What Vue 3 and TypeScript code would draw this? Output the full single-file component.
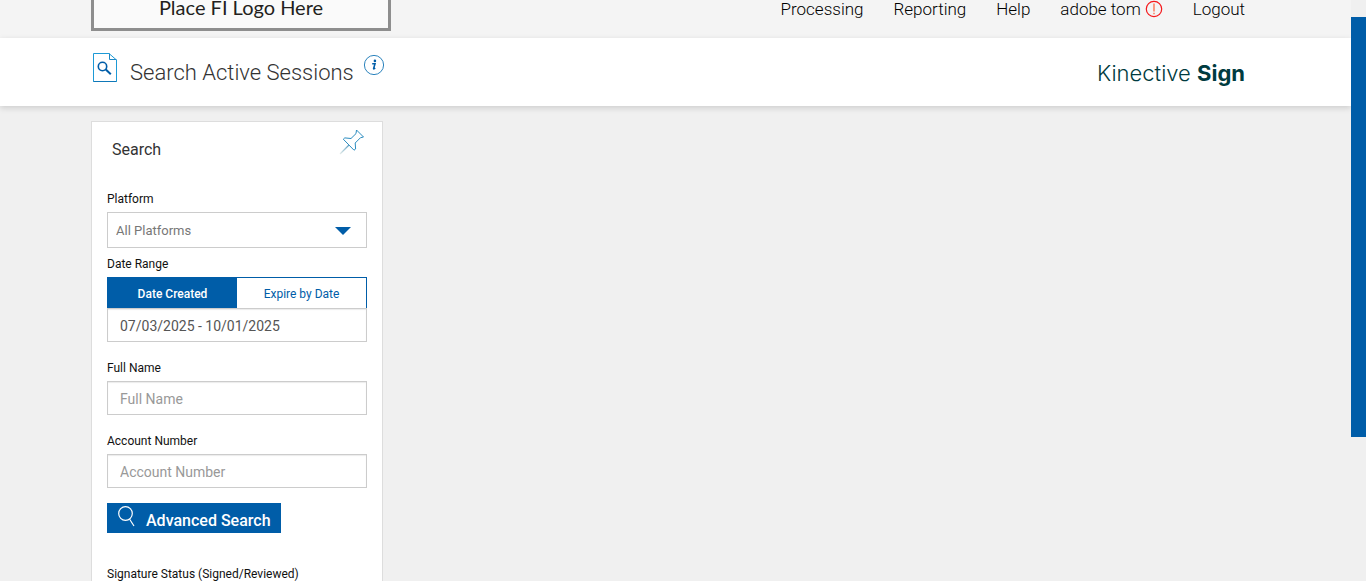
<script setup lang="ts">
import { ref } from 'vue'

type DateMode = 'created' | 'expires'

const leadingLinks = ['Processing', 'Reporting', 'Help']
const dateModes: { id: DateMode; label: string }[] = [
  { id: 'created', label: 'Date Created' },
  { id: 'expires', label: 'Expire by Date' },
]

const dateMode = ref<DateMode>('created')
const platform = ref('all')
const dateRange = ref('07/03/2025 - 10/01/2025')
const fullName = ref('')
const accountNumber = ref('')
</script>

<template>
  <div class="page">
    <div class="view">
      <header class="topbar">
        <div class="container topbar-row">
          <div class="fi-logo">Place FI Logo Here</div>
          <nav class="nav">
            <a v-for="link in leadingLinks" :key="link" href="#">{{ link }}</a>
            <a href="#" class="user">
              adobe tom
              <svg width="18" height="18" viewBox="0 0 18 18" fill="none" stroke="#f5191c">
                <circle cx="9" cy="9" r="7.7" stroke-width="1.2" />
                <path d="M9 3.5v8M9 12.8v1.4" stroke="#ff6a45" stroke-width="1.3" />
              </svg>
            </a>
            <a href="#">Logout</a>
          </nav>
        </div>
      </header>

      <section class="titlebar">
        <div class="container titlebar-row">
          <div class="title">
            <svg class="doc" width="26" height="31" viewBox="0 0 26 31" fill="none">
              <path d="M1.5 1.5H17L24.5 8V29.5H1.5Z" stroke="#1d9ad6" stroke-width="1" />
              <path d="M17.5 1.5V7.5H24.5" stroke="#1d87c4" stroke-width="1" />
              <path d="M1.5 29.5H24.5" stroke="#0f78b8" stroke-width="1" />
              <circle cx="10.5" cy="14.5" r="4.2" stroke="#005da8" stroke-width="1.6" />
              <path d="M13.8 17.6L18.8 22.2" stroke="#005da8" stroke-width="2" />
            </svg>
            <h1>Search Active Sessions</h1>
            <button type="button" class="info" aria-label="Information">
              <svg width="22" height="22" viewBox="0 0 22 22" fill="none">
                <circle cx="11" cy="11" r="9.6" stroke="#2b83bd" stroke-width="1" />
                <circle cx="11.9" cy="6.9" r="1.3" fill="#005da8" />
                <path d="M9.2 9.7H12L10.6 14.6Q10.5 15.3 12.2 14" stroke="#005da8" stroke-width="1.6" />
              </svg>
            </button>
          </div>
          <div class="brand">Kinective <strong>Sign</strong></div>
        </div>
      </section>

      <main class="container">
        <form class="card" @submit.prevent>
          <div class="card-head">
            <h2>Search</h2>
            <button type="button" class="pin" aria-label="Pin search panel">
              <svg width="26" height="26" viewBox="0 0 26 26" fill="none">
                <defs>
                  <linearGradient id="needle" x1="1" y1="25" x2="10" y2="16" gradientUnits="userSpaceOnUse">
                    <stop offset="0" stop-color="#e4ece9" />
                    <stop offset="1" stop-color="#5b9cc0" />
                  </linearGradient>
                </defs>
                <path d="M17.5 1L24.5 8L21.5 8.7L16.2 14L16.6 20L15 21.2L4.3 10.2L5.8 8.9L12 9.5L17 4.6Z" stroke="#2b8cc0" stroke-width="1" stroke-linejoin="round" />
                <path d="M10 16L1 25" stroke="url(#needle)" stroke-width="1.2" />
              </svg>
            </button>
          </div>

          <label for="platform">Platform</label>
          <div class="select-box">
            <select id="platform" v-model="platform">
              <option value="all">All Platforms</option>
            </select>
            <svg class="caret" width="16" height="8" viewBox="0 0 16 8">
              <path d="M0 0H16L8 8Z" fill="#005da8" />
            </svg>
          </div>

          <label for="date-range" class="near">Date Range</label>
          <div class="tabs">
            <button
              v-for="mode in dateModes"
              :key="mode.id"
              type="button"
              :class="{ active: dateMode === mode.id }"
              :aria-pressed="dateMode === mode.id"
              @click="dateMode = mode.id"
            >{{ mode.label }}</button>
          </div>
          <input id="date-range" v-model="dateRange" type="text" />

          <label for="full-name" class="far">Full Name</label>
          <input id="full-name" v-model="fullName" type="text" placeholder="Full Name" />

          <label for="account" class="far">Account Number</label>
          <input id="account" v-model="accountNumber" type="text" placeholder="Account Number" />

          <button type="submit" class="advanced">
            <svg width="18" height="22" viewBox="0 0 18 22" fill="none" stroke="#fff">
              <circle cx="8.5" cy="7.5" r="6.8" stroke-width="1.2" />
              <path d="M12.5 13L17 20" stroke-width="1.2" />
            </svg>
            <span>Advanced Search</span>
          </button>

          <p class="status">Signature Status (Signed/Reviewed)</p>
        </form>
      </main>
    </div>
    <div class="track"><div class="thumb"></div></div>
  </div>
</template>

<style>
body {
  margin: 0;
  background: #f0f0f0;
}
</style>

<style scoped>
.page {
  display: flex;
  height: 100vh;
  overflow: hidden;
  font-family: Roboto, "Liberation Sans", sans-serif;
  background: #f0f0f0;
  color: #111;
}
.page * {
  box-sizing: border-box;
}
.view {
  flex: 1;
  min-width: 0;
  overflow: hidden;
}
.track {
  width: 15px;
  padding-top: 17px;
}
.thumb {
  height: 74.5%;
  background: #005da8;
}
button,
input,
select {
  font-family: inherit;
  margin: 0;
  border-radius: 0;
}
svg {
  display: block;
  flex: none;
}
.container {
  max-width: 1169px;
  margin: 0 auto;
}
.topbar {
  background: #f4f4f4;
}
.topbar-row {
  display: flex;
  justify-content: space-between;
  align-items: flex-start;
  padding-bottom: 7px;
}
.fi-logo {
  width: 300px;
  height: 31px;
  border: 3px solid #8e8e8e;
  border-top: 0;
  background: #fafafa;
  color: #231f20;
  font-family: Lato, sans-serif;
  font-size: 20px;
  line-height: 14px;
  text-align: center;
}
.nav {
  display: flex;
  gap: 30px;
  padding-right: 15px;
  font-size: 17px;
  font-weight: 300;
  line-height: 18px;
}
.nav a {
  color: #000;
  text-decoration: none;
}
.nav .user {
  display: flex;
  gap: 4px;
}
.titlebar {
  position: relative;
  background: #fff;
  box-shadow: 0 2px 6px rgba(0, 0, 0, 0.15);
}
.titlebar-row {
  display: flex;
  justify-content: space-between;
  height: 68px;
  padding: 0 15px 0 1px;
}
.title {
  display: flex;
  padding-top: 14px;
}
.title h1 {
  margin: 0 9px 0 12px;
  color: #333;
  font-size: 22px;
  font-weight: 300;
  line-height: 42px;
}
.info {
  align-self: flex-start;
  padding: 2px 0 0;
  border: 0;
  background: none;
}
.brand {
  color: #003b40;
  font-family: Inter, sans-serif;
  font-size: 22px;
  font-weight: 300;
  line-height: 70px;
}
.brand strong {
  font-weight: 700;
}
.card {
  width: 292px;
  margin-top: 15px;
  padding: 0 15px 15px;
  border: 1px solid #ddd;
  background: #fff;
}
.card-head {
  display: flex;
  justify-content: space-between;
  height: 68px;
  padding: 7px 2px 0 5px;
}
.card-head h2 {
  margin: 0;
  color: #333;
  font-size: 16px;
  font-weight: 400;
  line-height: 42px;
}
.pin {
  align-self: flex-start;
  padding: 0;
  border: 0;
  background: none;
}
label,
.status {
  display: block;
  margin: 0 0 4px;
  font-size: 12px;
  line-height: 18px;
}
.near {
  margin-top: 7px;
}
.far {
  margin-top: 17px;
}
.select-box {
  position: relative;
}
select {
  display: block;
  width: 100%;
  height: 36px;
  padding: 0 8px;
  border: 1px solid #ccc;
  background: #fff;
  color: #777;
  font-size: 13px;
  appearance: none;
}
.caret {
  position: absolute;
  top: 15px;
  right: 16px;
  pointer-events: none;
}
.tabs {
  display: flex;
  border: 1px solid #005da8;
  border-bottom: 0;
}
.tabs button {
  flex: 1;
  height: 30px;
  padding: 2px 0 0;
  border: 0;
  background: #fff;
  color: #005da8;
  font-size: 12px;
}
.tabs .active {
  background: #005da8;
  color: #fff;
  font-weight: 500;
}
input {
  display: block;
  width: 100%;
  height: 34px;
  padding: 2px 12px 0;
  border: 1px solid #ccc;
  background: #fff;
  box-shadow: inset 0 1px 1px rgba(0, 0, 0, 0.08);
  color: #555;
  font-size: 14px;
}
input::placeholder {
  color: #999;
  opacity: 1;
}
.advanced {
  display: flex;
  gap: 11px;
  height: 30px;
  margin-top: 15px;
  padding: 3px 10px 0;
  border: 0;
  background: #005da8;
  color: #fff;
  font-size: 16px;
  font-weight: 500;
  line-height: 30px;
}
.status {
  margin-top: 32px;
}
</style>
